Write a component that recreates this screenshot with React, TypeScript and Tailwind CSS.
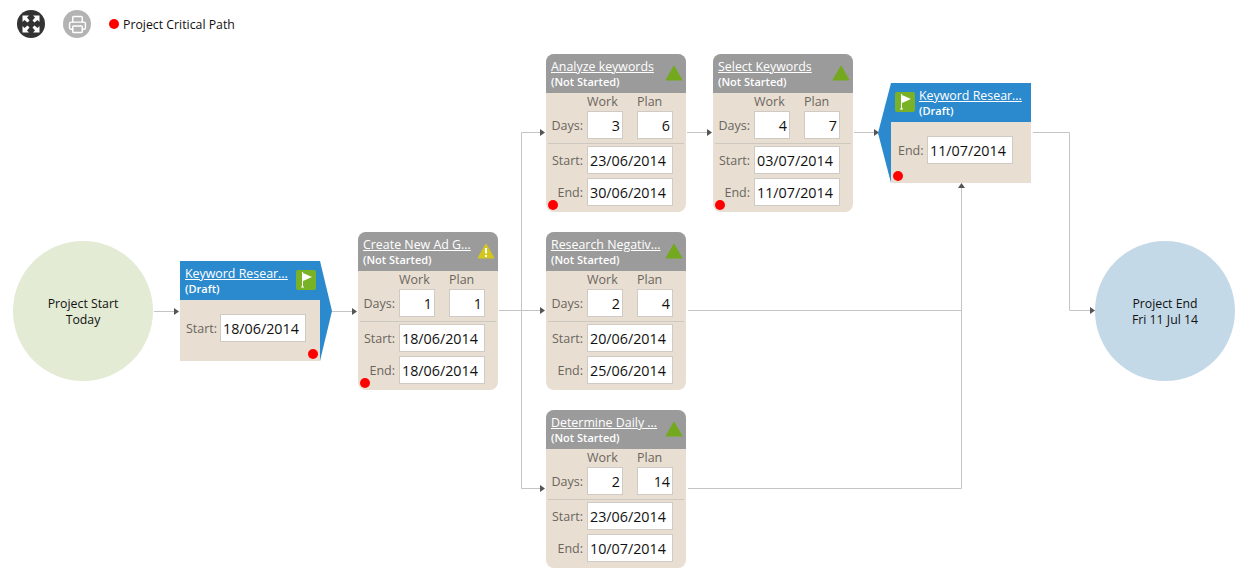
import React from 'react';
import { Printer } from 'lucide-react';

type TaskProps = {
  x: number;
  y: number;
  title: string;
  work: number;
  plan: number;
  start: string;
  end: string;
  warn?: boolean;
  critical?: boolean;
};

const tasks: TaskProps[] = [
  { x: 358, y: 232, title: 'Create New Ad G...', work: 1, plan: 1, start: '18/06/2014', end: '18/06/2014', warn: true, critical: true },
  { x: 546, y: 54, title: 'Analyze keywords', work: 3, plan: 6, start: '23/06/2014', end: '30/06/2014', critical: true },
  { x: 713, y: 54, title: 'Select Keywords', work: 4, plan: 7, start: '03/07/2014', end: '11/07/2014', critical: true },
  { x: 546, y: 232, title: 'Research Negativ...', work: 2, plan: 4, start: '20/06/2014', end: '25/06/2014' },
  { x: 546, y: 410, title: 'Determine Daily ...', work: 2, plan: 14, start: '23/06/2014', end: '10/07/2014' },
];

const lines = [
  'M154 311.5H174',
  'M332 311.5H352',
  'M499 310.5H521.5V488.5H540',
  'M521.5 310.5V132.5H540',
  'M521.5 310.5H540',
  'M687 132.5H707',
  'M854 132.5H874',
  'M1033 132.5H1069.5V310.5H1090',
  'M688 310.5H961.5',
  'M688 488.5H961.5V188',
];

const arrows = [
  '174,308 179,311.5 174,315',
  '352,308 357,311.5 352,315',
  '540,129 545,132.5 540,136',
  '540,307 545,310.5 540,314',
  '540,485 545,488.5 540,492',
  '707,129 712,132.5 707,136',
  '874,129 879,132.5 874,136',
  '1090,307 1095,310.5 1090,314',
  '958,188 961.5,183 965,188',
];

const Field = ({ value, className }: { value: string | number; className: string }) => (
  <div className={`h-[28px] bg-white border border-[#cfcac4] px-[2px] pt-[1px] text-[14.3px] leading-[26px] text-[#111] ${className}`}>{value}</div>
);

const RedDot = ({ className }: { className: string }) => (
  <span className={`absolute w-[10px] h-[10px] rounded-full bg-[#ff0000] ${className}`} />
);

const FlagIcon = () => (
  <svg width="20" height="20" viewBox="0 0 20 20" className="shrink-0">
    <rect width="20" height="20" rx="2" fill="#7ab227" />
    <path d="M6.5 2V17" stroke="#fff" strokeWidth="1" />
    <path d="M5 17H8" stroke="#fff" strokeWidth="1" />
    <path d="M7 3L16 7L7 11Z" fill="#fff" />
  </svg>
);

const StatusIcon = ({ warn }: { warn?: boolean }) => (
  <svg width="18" height="16" viewBox="0 0 18 16" className="shrink-0">
    <path d="M9 1L17 15H1Z" fill={warn ? '#d3c71c' : '#74a91f'} stroke={warn ? '#d3c71c' : '#74a91f'} strokeLinejoin="round" />
    {warn && <path d="M9 5V10.5M9 12V14" stroke="#fff" strokeWidth="2" />}
  </svg>
);

const TaskCard = ({ x, y, title, work, plan, start, end, warn, critical }: TaskProps) => (
  <div className="absolute w-[140px] h-[158px] rounded-[8px] overflow-hidden bg-[#e8dfd2] text-[#6b6560]" style={{ left: x, top: y }}>
    <div className="h-[39px] bg-[#9b9b9b] pl-[5px] pr-[3px] pt-[5px] flex justify-between text-white">
      <div className="min-w-0">
        <div className="text-[12.4px] leading-[16px] underline whitespace-nowrap">{title}</div>
        <div className="text-[11px] leading-[14px] font-semibold">(Not Started)</div>
      </div>
      <div className="pt-[6px]"><StatusIcon warn={warn} /></div>
    </div>
    <div className="grid grid-cols-[36px_36px] gap-x-[14px] ml-[41px] h-[18px] text-[12.5px] leading-[17px] whitespace-nowrap">
      <span>Work</span>
      <span>Plan</span>
    </div>
    <div className="flex items-center h-[28px] text-[12.5px]">
      <span className="w-[37px] text-right pt-[2px]">Days:</span>
      <div className="flex gap-[14px] ml-[4px]">
        <Field value={work} className="w-[36px] text-right" />
        <Field value={plan} className="w-[36px] text-right" />
      </div>
    </div>
    <div className="mx-[2px] mt-[4px] mb-[2px] h-px bg-[#cdc8c0]" />
    <div className="flex flex-col gap-[4px] text-[12.5px]">
      <div className="flex items-center">
        <span className="w-[37px] text-right pt-[2px]">Start:</span>
        <Field value={start} className="w-[86px] ml-[4px]" />
      </div>
      <div className="flex items-center">
        <span className="w-[37px] text-right pt-[2px]">End:</span>
        <Field value={end} className="w-[86px] ml-[4px]" />
      </div>
    </div>
    {critical && <RedDot className="left-[2px] bottom-[2px]" />}
  </div>
);

const App: React.FC = () => {
  return (
    <div className="relative w-[1249px] h-[583px] overflow-hidden bg-white font-['Open_Sans','Noto_Sans',sans-serif]">
      <div className="flex items-center h-[28px] mt-[10px] ml-[17px] absolute top-0 left-0">
        <div className="w-[28px] h-[28px] rounded-full bg-[#333333] flex items-center justify-center">
          <svg width="18" height="18" viewBox="0 0 18 18" fill="#fff">
            <path d="M0.5 0.5H7L5 2.5L7.5 5.5L5.5 7.5L2.5 5L0.5 7Z" />
            <path d="M17.5 0.5H11L13 2.5L10.5 5.5L12.5 7.5L15.5 5L17.5 7Z" />
            <path d="M0.5 17.5H7L5 15.5L7.5 12.5L5.5 10.5L2.5 13L0.5 11Z" />
            <path d="M17.5 17.5H11L13 15.5L10.5 12.5L12.5 10.5L15.5 13L17.5 11Z" />
          </svg>
        </div>
        <div className="w-[28px] h-[28px] rounded-full bg-[#b3b3b3] flex items-center justify-center ml-[18px]">
          <Printer size={19} color="#fff" strokeWidth={1.8} />
        </div>
        <span className="w-[10px] h-[10px] rounded-full bg-[#ff0000] ml-[18px]" />
        <span className="ml-[4px] pt-[2px] text-[12.3px] text-[#111] whitespace-nowrap">Project Critical Path</span>
      </div>

      <svg width="1249" height="583" className="absolute left-0 top-0">
        {lines.map((d) => (
          <path key={d} d={d} fill="none" stroke="#c4c4c4" strokeWidth="1" />
        ))}
        {arrows.map((p) => (
          <polygon key={p} points={p} fill="#555" />
        ))}
        <polygon points="320,261 332,311 320,361" fill="#2b8ace" />
        <polygon points="891,83 878,133 891,183" fill="#2b8ace" />
      </svg>

      <div className="absolute left-[13px] top-[241px] w-[140px] h-[140px] rounded-full bg-[#e3ebd5] flex flex-col items-center justify-center pt-[2px] text-[12.3px] leading-[16px] text-[#111]">
        <span>Project Start</span>
        <span>Today</span>
      </div>

      <div className="absolute left-[180px] top-[261px] w-[140px] h-[100px] bg-[#e8dfd2]">
        <div className="h-[39px] bg-[#2b8ace] pl-[5px] pt-[5px] text-white flex">
          <div className="w-[111px] min-w-0">
            <div className="text-[12.4px] leading-[16px] underline whitespace-nowrap">Keyword Resear...</div>
            <div className="text-[11px] leading-[14px] font-semibold">(Draft)</div>
          </div>
          <div className="mt-[4px]"><FlagIcon /></div>
        </div>
        <div className="flex items-center mt-[14px] ml-[6px] text-[12.5px] text-[#6b6560]">
          <span className="w-[30px] pt-[2px]">Start:</span>
          <Field value="18/06/2014" className="w-[86px] ml-[4px]" />
        </div>
        <RedDot className="right-[2px] bottom-[2px]" />
      </div>

      {tasks.map((t) => (
        <TaskCard key={t.title} {...t} />
      ))}

      <div className="absolute left-[891px] top-[83px] w-[140px] h-[100px] bg-[#e8dfd2]">
        <div className="h-[39px] bg-[#2b8ace] pl-[4px] pt-[5px] text-white flex">
          <div className="mt-[4px] mr-[4px]"><FlagIcon /></div>
          <div className="min-w-0">
            <div className="text-[12.4px] leading-[16px] underline whitespace-nowrap">Keyword Resear...</div>
            <div className="text-[11px] leading-[14px] font-semibold">(Draft)</div>
          </div>
        </div>
        <div className="flex items-center mt-[14px] ml-[7px] text-[12.5px] text-[#6b6560]">
          <span className="w-[25px] pt-[2px]">End:</span>
          <Field value="11/07/2014" className="w-[86px] ml-[4px]" />
        </div>
        <RedDot className="left-[2px] bottom-[2px]" />
      </div>

      <div className="absolute left-[1095px] top-[241px] w-[140px] h-[140px] rounded-full bg-[#c4d9e7] flex flex-col items-center justify-center pt-[2px] text-[12.3px] leading-[16px] text-[#111]">
        <span>Project End</span>
        <span>Fri 11 Jul 14</span>
      </div>
    </div>
  );
};

export default App;
